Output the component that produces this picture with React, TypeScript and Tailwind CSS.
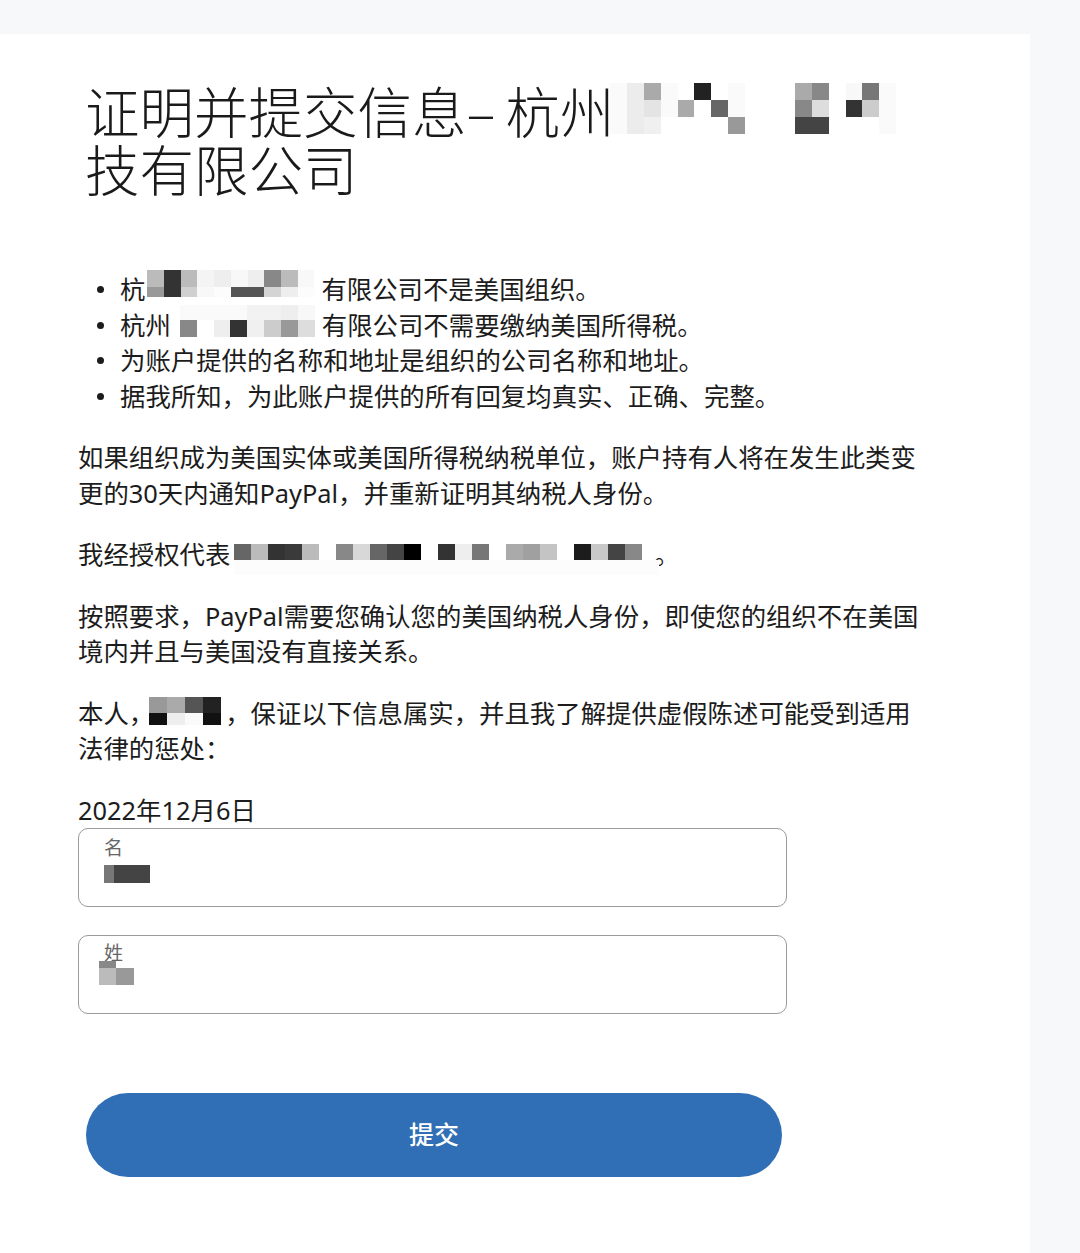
import React from "react";

type MosaicProps = {
  rows: string[][];
  cw: number;
  rh: number[];
  top: number;
  width: number;
  left?: number;
};

// pixelated redaction that sits over the running text without changing the line height
function InlineMosaic({ rows, cw, rh, top, width, left = 0 }: MosaicProps) {
  return (
    <span className="relative inline-block" style={{ width }}>
      {"\u00a0"}
      <span className="absolute flex flex-col" style={{ top, left }}>
        {rows.map((row, i) => (
          <span key={i} className="flex">
            {row.map((c, j) => (
              <span key={j} className="block" style={{ width: cw, height: rh[i], backgroundColor: c }} />
            ))}
          </span>
        ))}
      </span>
    </span>
  );
}

function BlockMosaic({ rows, cw, rh }: { rows: string[][]; cw: number[]; rh: number[] }) {
  return (
    <div className="flex flex-col">
      {rows.map((row, i) => (
        <div key={i} className="flex">
          {row.map((c, j) => (
            <div key={j} style={{ width: cw[j], height: rh[i], backgroundColor: c }} />
          ))}
        </div>
      ))}
    </div>
  );
}

const W = "#ffffff";
const L = "#fafafa";

const titleRows = [
  [L, "#ececec", "#aaaaaa", L, W, "#222222", W, L, W, W, W, "#aaaaaa", "#888888", W, "#f8f8f8", "#777777", L],
  [L, "#ececec", "#e4e4e4", L, "#aaaaaa", W, "#666666", L, W, W, W, "#888888", "#dddddd", W, "#333333", "#cccccc", L],
  [L, "#ececec", "#f0f0f0", W, W, W, W, "#999999", W, W, W, "#444444", "#444444", W, W, W, L],
];

const bullet1Rows = [
  ["#bbbbbb", "#333333", "#bbbbbb", "#f4f4f4", "#eeeeee", "#f8f8f8", "#eeeeee", "#888888", "#bbbbbb", "#f8f8f8"],
  ["#999999", "#333333", "#d0d0d0", "#f8f8f8", "#fcfcfc", "#555555", "#555555", "#d4d4d4", "#eeeeee", "#fcfcfc"],
];

const bullet2Rows = [
  [L, L, L, L, "#f2f2f2", "#f2f2f2", "#eeeeee", "#f8f8f8"],
  ["#888888", W, "#eeeeee", "#333333", "#f0f0f0", "#cccccc", "#999999", "#dddddd"],
];

const authRows = [
  ["#666666", "#bbbbbb", "#333333", "#3a3a3a", "#bbbbbb", W, "#888888", "#d8d8d8", "#666666", "#444444", "#000000", W, "#333333", "#eeeeee", "#777777", W, "#aaaaaa", "#a0a0a0", "#c4c4c4", W, "#1c1c1c", "#c8c8c8", "#444444", "#888888"],
  Array(25).fill("#fcfcfc"),
];

const nameRows = [
  ["#999999", "#aaaaaa", "#555555", "#222222"],
  ["#111111", "#eeeeee", "#fafafa", "#111111"],
];

function Bullet({ children }: { children: React.ReactNode }) {
  return (
    <li className="flex items-center">
      <span className="ml-[19px] mr-[16px] h-[7px] w-[7px] shrink-0 rounded-full bg-[#1c1c1c]" />
      <span>{children}</span>
    </li>
  );
}

export default function App() {
  return (
    <div
      className="flex min-h-[1253px] flex-col bg-[#f7f8fa] pt-[34px] pr-[50px]"
      style={{ fontFamily: '"Noto Sans", "Noto Sans CJK SC", sans-serif' }}
    >
      <div className="flex-1 bg-white pt-[47px] text-[#1c1c1c]">
        <h1
          className="w-[940px] pl-[85px] text-[54.5px] font-light leading-[58px] text-[#1a1a1a]"
          style={{ fontFamily: '"Noto Sans CJK SC", sans-serif' }}
        >
          证明并提交信息–<span className="ml-[10px]">杭州</span>
          <InlineMosaic rows={titleRows} cw={16.8} rh={[17, 17, 17]} top={2} width={280} left={-4} />
          <br />
          技有限公司
        </h1>

        <div className="mt-[75px] w-[925px] pl-[78px] text-[25.4px] leading-[35.5px]">
          <ul>
            <Bullet>
              杭<InlineMosaic rows={bullet1Rows} cw={16.7} rh={[17, 10]} top={-2} width={176} left={2} />
              有限公司不是美国组织。
            </Bullet>
            <Bullet>
              杭州<InlineMosaic rows={bullet2Rows} cw={16.9} rh={[15, 17]} top={-3} width={151} left={9} />
              有限公司不需要缴纳美国所得税。
            </Bullet>
            <Bullet>为账户提供的名称和地址是组织的公司名称和地址。</Bullet>
            <Bullet>据我所知，为此账户提供的所有回复均真实、正确、完整。</Bullet>
          </ul>

          <p className="mt-[26px]">
            如果组织成为美国实体或美国所得税纳税单位，账户持有人将在发生此类变更的30天内通知PayPal，并重新证明其纳税人身份。
          </p>

          <p className="mt-[26px]">
            我经授权代表
            <InlineMosaic rows={authRows} cw={17} rh={[16, 15]} top={7} width={424} left={4} />
            。
          </p>

          <p className="mt-[26px]">
            按照要求，PayPal需要您确认您的美国纳税人身份，即使您的组织不在美国境内并且与美国没有直接关系。
          </p>

          <p className="mt-[26px]">
            本人，
            <span className="-ml-[5px]">
              <InlineMosaic rows={nameRows} cw={18} rh={[16, 12]} top={1} width={76} />
            </span>
            ，保证以下信息属实，并且我了解提供虚假陈述可能受到适用法律的惩处：
          </p>

          <p className="mt-[26px]">2022年12月6日</p>
        </div>

        <div className="ml-[78px] w-[709px]">
          <div className="h-[79px] rounded-[10px] border-[1.5px] border-[#9b9b9b] pl-[25px] pt-[6px]">
            <div className="text-[19px] leading-[26px] text-[#666666]">名</div>
            <div className="mt-[4px]">
              <BlockMosaic rows={[["#777777", "#444444", "#444444"]]} cw={[10, 18, 18]} rh={[18]} />
            </div>
          </div>
          <div className="mt-[28px] h-[79px] rounded-[10px] border-[1.5px] border-[#9b9b9b] pl-[20px] pt-[5px]">
            <div className="pl-[5px] text-[19px] leading-[24px] text-[#666666]">姓</div>
            <div className="-mt-[4px]">
              <BlockMosaic rows={[["#888888", W], ["#bbbbbb", "#999999"]]} cw={[17, 18]} rh={[7, 17]} />
            </div>
          </div>
        </div>

        <div className="ml-[86px] mt-[79px] w-[696px]">
          <button
            type="button"
            className="flex h-[84px] w-full items-center justify-center rounded-full bg-[#306fb5] text-[25px] font-medium text-white"
          >
            提交
          </button>
        </div>
      </div>
    </div>
  );
}
